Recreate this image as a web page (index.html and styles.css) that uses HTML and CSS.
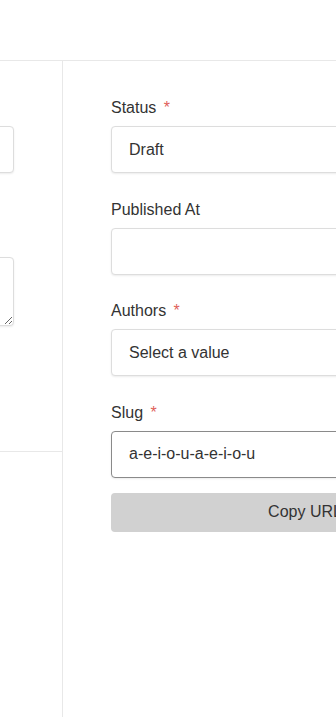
FILE: index.html
```html
<!DOCTYPE html>
<html lang="en">
<head>
    <meta charset="UTF-8">
    <meta name="viewport" content="width=device-width, initial-scale=1.0">
    <title>Edit Post</title>
    <link rel="stylesheet" href="styles.css">
</head>
<body>
    <div class="topbar"></div>
    <div class="main">
        <div class="side">
            <div class="side-section">
                <input class="field side-input" type="text">
                <textarea class="field side-textarea"></textarea>
            </div>
        </div>

        <div class="content">
            <form class="post-form">
                <div class="form-group">
                    <label class="form-label">Status <span class="required">*</span></label>
                    <div class="field">Draft</div>
                </div>

                <div class="form-group">
                    <label class="form-label">Published At</label>
                    <div class="field"></div>
                </div>

                <div class="form-group">
                    <label class="form-label">Authors <span class="required">*</span></label>
                    <div class="field">Select a value</div>
                </div>

                <div class="form-group slug-group">
                    <label class="form-label">Slug <span class="required">*</span></label>
                    <div class="field active">a-e-i-o-u-a-e-i-o-u</div>
                </div>

                <button type="button" class="copy-button">Copy URL</button>
            </form>
        </div>
    </div>
</body>
</html>
```

FILE: styles.css
```css
body {
    margin: 0;
    background-color: #fff;
    color: #333;
    font-family: 'Liberation Sans', Arial, sans-serif;
    font-size: 16px;
    height: 100vh;
    overflow: hidden;
}

.topbar {
    height: 60px;
    border-bottom: 1px solid #e8e8e8;
}

.main {
    display: flex;
    height: calc(100vh - 61px);
}

.side {
    width: 62px;
    flex-shrink: 0;
    border-right: 1px solid #e8e8e8;
    overflow: hidden;
}

.side-section {
    display: flex;
    flex-direction: column;
    align-items: flex-end;
    padding: 65px 48px 0 0;
    height: 325px;
    border-bottom: 1px solid #e8e8e8;
}

.field {
    box-sizing: border-box;
    height: 47px;
    padding: 0 17px;
    display: flex;
    align-items: center;
    background-color: #fff;
    border: 1px solid #ddd;
    border-radius: 4px;
    box-shadow: 0 1px 2px rgba(0, 0, 0, 0.08);
    color: #333;
    font-family: inherit;
    font-size: 16px;
}

.field.active {
    border-color: #8a8a8a;
}

.side-input {
    width: 300px;
    flex-shrink: 0;
}

.side-textarea {
    width: 300px;
    height: 69px;
    margin-top: 84px;
    flex-shrink: 0;
    resize: vertical;
    outline: none;
}

.content {
    flex: 1;
    overflow: hidden;
    padding-left: 48px;
}

.post-form {
    width: 388px;
    padding-top: 37px;
}

.form-group {
    margin-bottom: 26.5px;
}

.slug-group {
    margin-bottom: 15px;
}

.form-label {
    display: block;
    line-height: 20px;
    margin-bottom: 8px;
}

.required {
    color: #e0605a;
    margin-left: 3px;
}

.copy-button {
    display: block;
    width: 100%;
    height: 39px;
    border: none;
    border-radius: 4px;
    background-color: #d1d1d1;
    color: #333;
    font-family: inherit;
    font-size: 16px;
    cursor: pointer;
}
```
